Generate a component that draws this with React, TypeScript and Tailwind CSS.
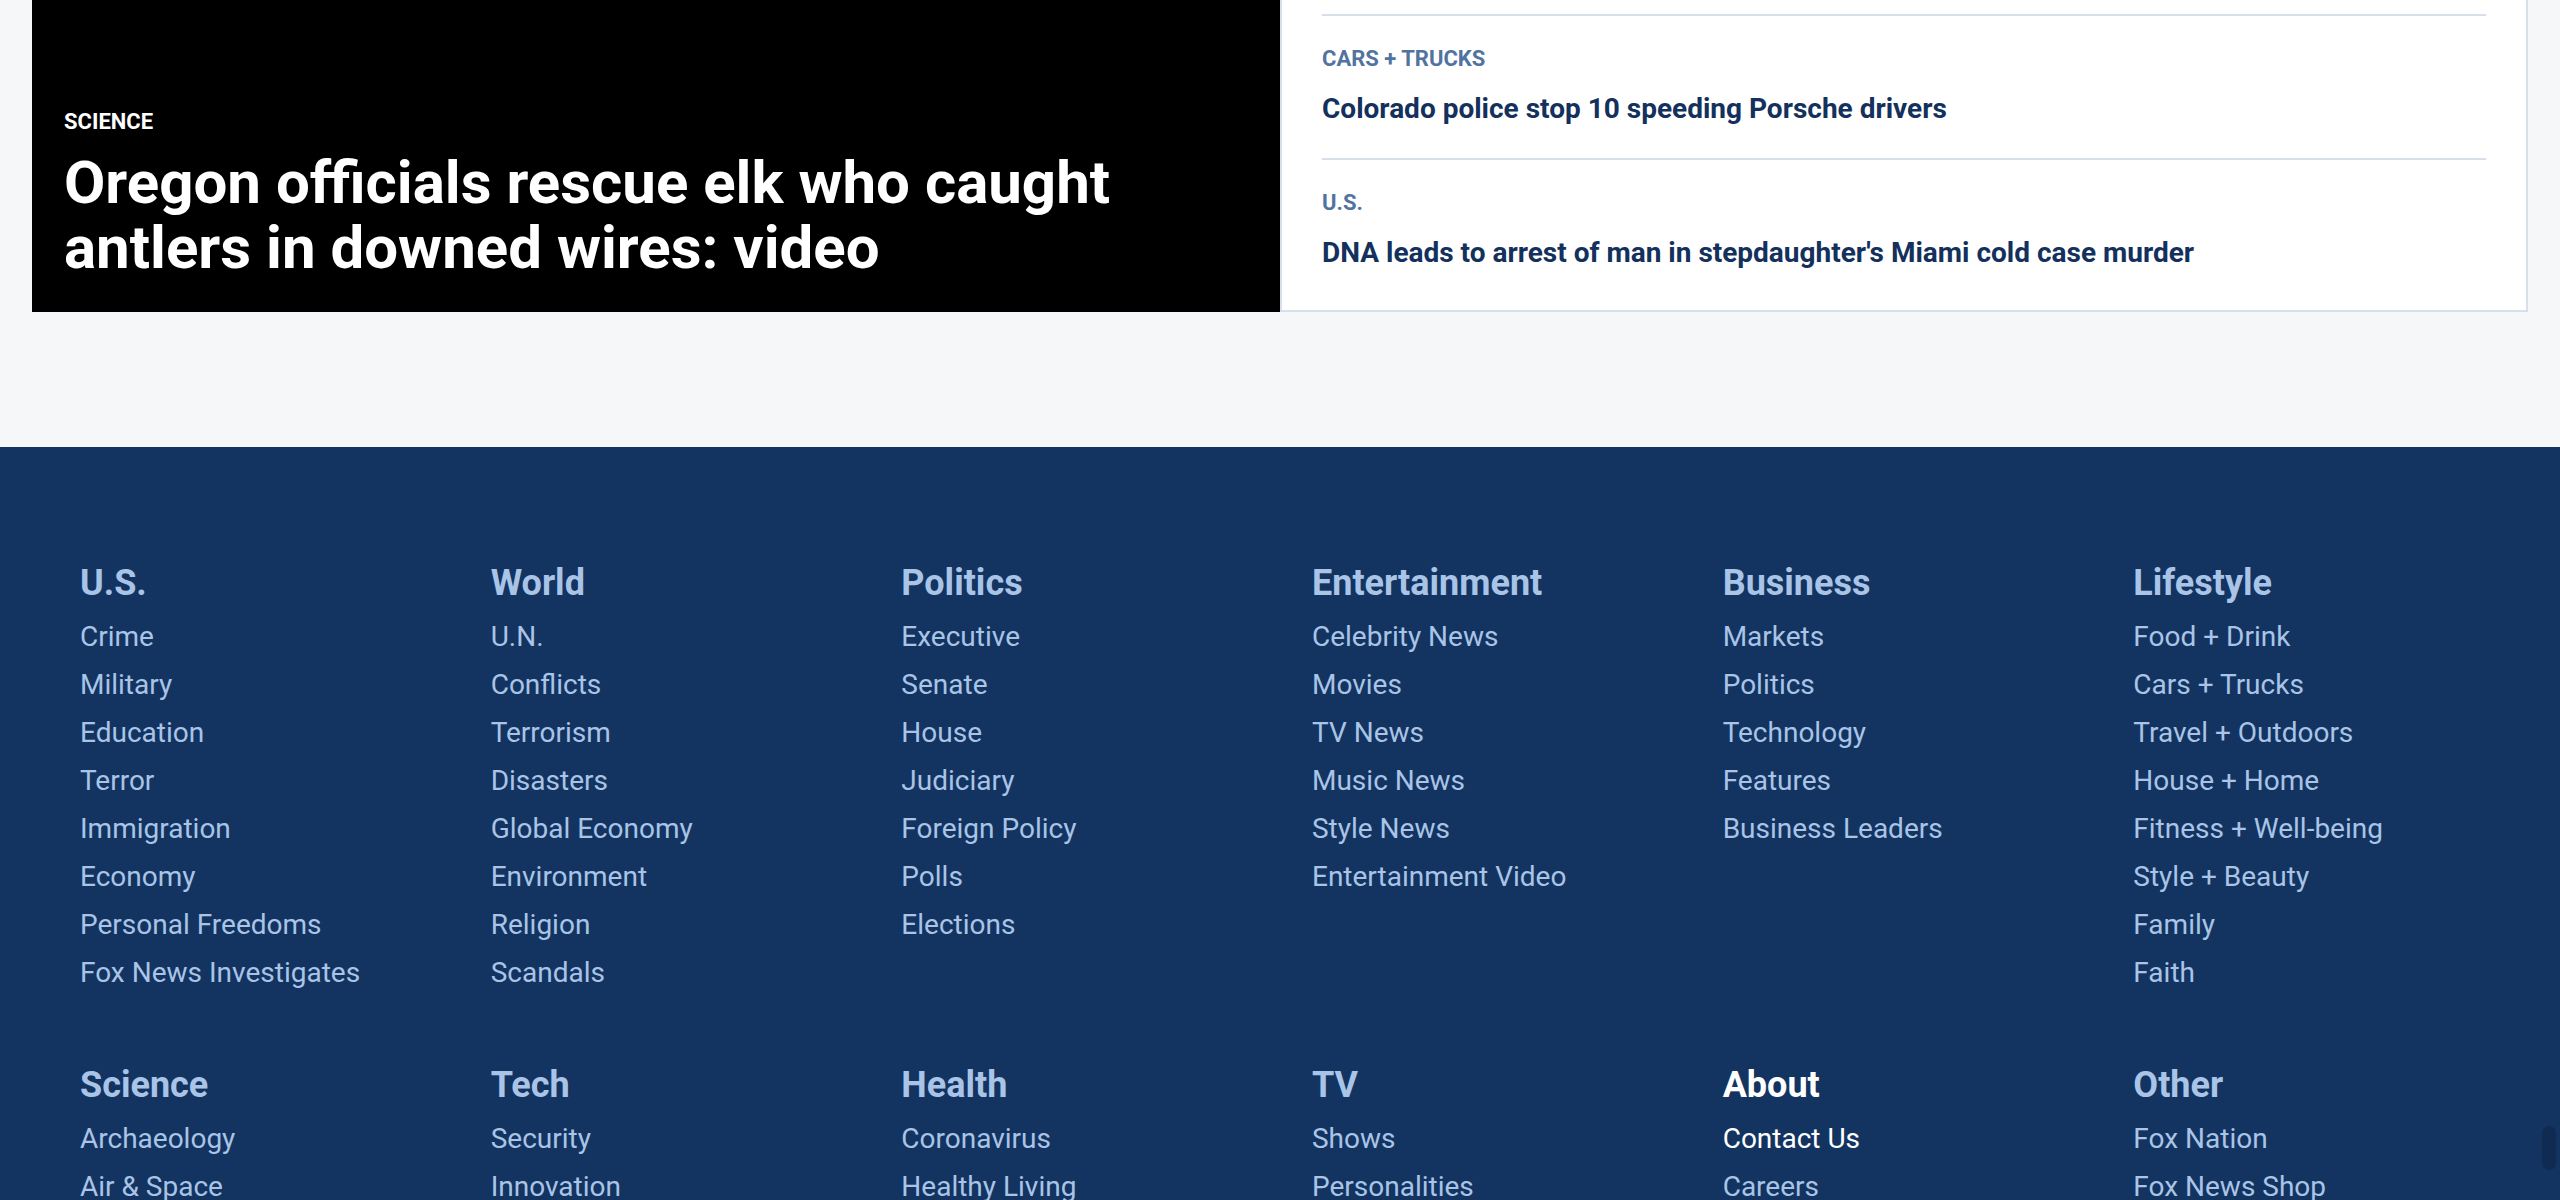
const stories = [
  { label: "CARS + TRUCKS", title: "Colorado police stop 10 speeding Porsche drivers" },
  { label: "U.S.", title: "DNA leads to arrest of man in stepdaughter's Miami cold case murder" },
];

type FooterGroup = { title: string; links: string[]; active?: boolean };

const groups: FooterGroup[] = [
  {
    title: "U.S.",
    links: ["Crime", "Military", "Education", "Terror", "Immigration", "Economy", "Personal Freedoms", "Fox News Investigates"],
  },
  {
    title: "World",
    links: ["U.N.", "Conflicts", "Terrorism", "Disasters", "Global Economy", "Environment", "Religion", "Scandals"],
  },
  {
    title: "Politics",
    links: ["Executive", "Senate", "House", "Judiciary", "Foreign Policy", "Polls", "Elections"],
  },
  {
    title: "Entertainment",
    links: ["Celebrity News", "Movies", "TV News", "Music News", "Style News", "Entertainment Video"],
  },
  {
    title: "Business",
    links: ["Markets", "Politics", "Technology", "Features", "Business Leaders"],
  },
  {
    title: "Lifestyle",
    links: ["Food + Drink", "Cars + Trucks", "Travel + Outdoors", "House + Home", "Fitness + Well-being", "Style + Beauty", "Family", "Faith"],
  },
  // second row is cut off by the bottom of the viewport
  { title: "Science", links: ["Archaeology", "Air & Space"] },
  { title: "Tech", links: ["Security", "Innovation"] },
  { title: "Health", links: ["Coronavirus", "Healthy Living"] },
  { title: "TV", links: ["Shows", "Personalities"] },
  { title: "About", active: true, links: ["Contact Us", "Careers"] },
  { title: "Other", links: ["Fox Nation", "Fox News Shop"] },
];

export default function App() {
  return (
    <div className="relative h-[1200px] overflow-hidden bg-[#f5f7f9] font-['Roboto','Liberation_Sans',sans-serif]">
      {/* top stories */}
      <section className="grid grid-cols-2 px-8">
        <div className="flex h-[312px] flex-col justify-end bg-black px-8 pb-8">
          <span className="mb-[14px] text-[22px] font-bold leading-[28px] text-white">SCIENCE</span>
          <h2 className="text-[60px] font-bold leading-[65px] text-white">
            Oregon officials rescue elk who caught antlers in downed wires: video
          </h2>
        </div>

        <div className="border-x-2 border-b-2 border-[#d4e0ec] bg-white px-10 pt-[14px] pb-[8px]">
          {stories.map((s) => (
            <div key={s.title} className="flex flex-col border-t-2 border-[#d4e0ec] pt-[30px] pb-[32px]">
              <span className="text-[22px] font-bold leading-[26px] text-[#52739f]">{s.label}</span>
              <a className="mt-[20px] text-[28px] font-bold leading-[34px] text-[#13315c]">{s.title}</a>
            </div>
          ))}
        </div>
      </section>

      {/* footer */}
      <footer className="mt-[135px] bg-[#133461] px-12 pt-[112px] pb-24">
        <div className="grid grid-cols-6 gap-y-[64px]">
          {groups.map((g) => (
            <div key={g.title} className="flex flex-col pl-8">
              <h3
                className={
                  g.active
                    ? "mb-[8px] pt-[2px] text-[36px] font-bold leading-[44px] text-white"
                    : "mb-[8px] pt-[2px] text-[36px] font-bold leading-[44px] text-[#a9c4e6]"
                }
              >
                {g.title}
              </h3>
              <ul>
                {g.links.map((l, i) => (
                  <li
                    key={l}
                    className={
                      g.active && i === 0
                        ? "text-[28px] leading-[48px] text-white"
                        : "text-[28px] leading-[48px] text-[#a9c4e6]"
                    }
                  >
                    {l}
                  </li>
                ))}
              </ul>
            </div>
          ))}
        </div>
      </footer>

      {/* scrollbar thumb */}
      <div className="absolute top-[1126px] left-[2542px] h-[44px] w-[14px] rounded-full bg-[#0f2b52]" />
    </div>
  );
}
